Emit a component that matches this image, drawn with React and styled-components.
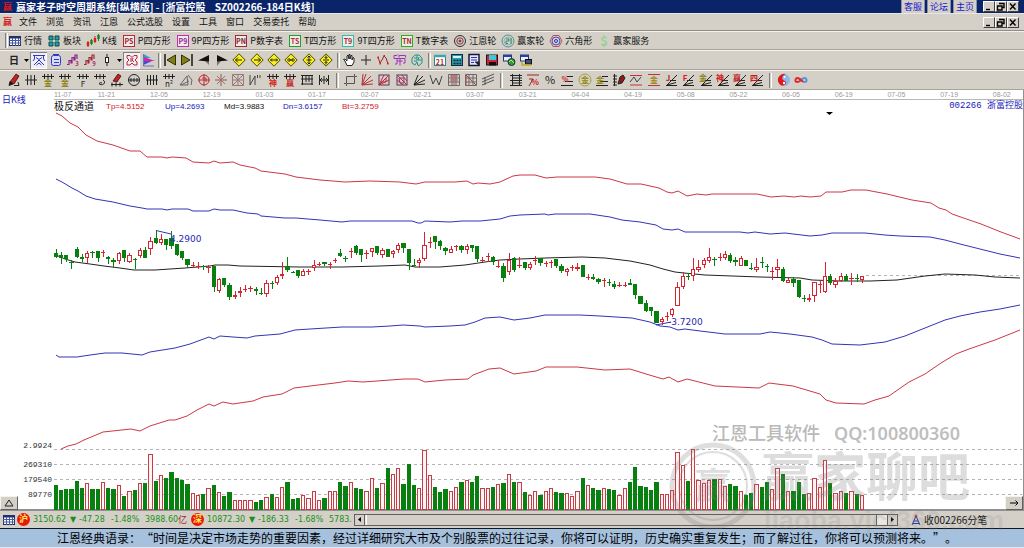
import React from 'react'
import styled, { createGlobalStyle } from 'styled-components'

const GlobalStyle = createGlobalStyle`
  * {
    box-sizing: border-box;
  }
  body {
    margin: 0;
    background: #d4d0c8;
    font-family: "Noto Sans CJK SC", "Liberation Sans", sans-serif;
    font-size: 9px;
    color: #111;
  }
  button {
    font: inherit;
    color: inherit;
    padding: 0;
    margin: 0;
    border: 0;
    background: none;
  }
  svg {
    display: block;
  }
`

const Page = styled.div`
  position: relative;
`
const TitleBar = styled.header`
  display: flex;
  align-items: center;
  height: 14px;
  padding: 0 5px 0 3px;
  gap: 2px;
  background: #0a246a;
  color: #fff;
  border-bottom: 1px solid #e8e6e0;
`
const Title = styled.h1`
  margin: 0;
  flex: 1;
  font-size: 10px;
  line-height: 14px;
  font-weight: 700;
  white-space: pre;
`
const Logo = styled.span`
  width: 11px;
  font-size: 9px;
  line-height: 14px;
  font-weight: 700;
  color: #d81820;
`
const TitleLink = styled.a`
  padding: 0 2px;
  font-size: 9px;
  line-height: 13px;
  color: #1818d0;
  background: #d4d0c8;
  border: 1px solid #8890a8;
  border-width: 0 1px;
  text-decoration: none;
`
const WindowButtons = styled.div`
  display: flex;
  margin-left: 4px;
`
const WindowButton = styled.button`
  width: 12px;
  height: 11px;
  background: #d4d0c8;
  border: 1px solid #fff;
  border-right-color: #404040;
  border-bottom-color: #404040;
`
const MenuBar = styled.nav`
  display: flex;
  align-items: center;
  height: 17px;
  padding: 0 5px 0 3px;
  border-bottom: 1px solid #908c84;
`
const MenuItem = styled.button`
  margin-left: 9px;
  line-height: 14px;
  &:first-of-type {
    margin-left: 5px;
  }
`
const Spacer = styled.div`
  flex: 1;
`
const Toolbar = styled.div`
  display: flex;
  align-items: center;
  height: ${(p) => p.$h || 20}px;
  padding-left: 5px;
  border-top: 1px solid #f4f2ee;
  border-bottom: 1px solid #a8a49c;
`
const Grip = styled.span`
  width: 3px;
  height: 15px;
  margin-right: ${(p) => p.$after || 0}px;
  margin-left: ${(p) => p.$before || 0}px;
  border-left: 1px solid #808080;
  border-right: 1px solid #fff;
`
const ToolLink = styled.button`
  display: flex;
  align-items: center;
  gap: 2px;
  margin-right: 5px;
  line-height: 14px;
  white-space: nowrap;
`
const IconGroup = styled.div`
  display: grid;
  grid-auto-flow: column;
  grid-auto-columns: 1fr;
  width: ${(p) => p.$w}px;
`
const IconButton = styled.button`
  display: flex;
  align-items: center;
  justify-content: center;
  height: 17px;
  background: ${(p) => (p.$on ? '#eeeef4' : 'none')};
  box-shadow: ${(p) => (p.$on ? 'inset 1px 1px #808080, inset -1px -1px #fff' : 'none')};
`
const Caret = styled.button`
  width: 7px;
  height: 17px;
  display: flex;
  align-items: center;
  justify-content: center;
`
const Chart = styled.main`
  background: #fff;
  border-right: 1px solid #909090;
`
const ChartHead = styled.div`
  display: flex;
  height: 22px;
`
const Period = styled.div`
  width: 54px;
  padding: 3px 0 0 2px;
  font-size: 9px;
  line-height: 13px;
  color: #1818b8;
`
const HeadRight = styled.div`
  flex: 1;
  min-width: 0;
`
const Dates = styled.div`
  display: flex;
  height: 10px;
  margin-right: -5px;
  border-bottom: 1px solid #b8b8b8;
  font-family: "Liberation Sans", sans-serif;
  font-size: 7px;
  line-height: 10px;
  color: #999;
  text-align: center;
`
const DatesClip = styled.div`
  overflow: hidden;
`
const DateCell = styled.span`
  flex: 1;
  &:first-child {
    flex: 0 0 26px;
    text-align: left;
  }
`
const Legend = styled.div`
  display: flex;
  height: 12px;
  line-height: 13px;
`
const LegendItem = styled.span`
  width: ${(p) => p.$w || 59}px;
  font-family: "Liberation Sans", "Noto Sans CJK SC", sans-serif;
  font-size: ${(p) => p.$size || 8}px;
  color: ${(p) => p.$c || '#111'};
  white-space: nowrap;
`
const Symbol = styled.span`
  margin-left: auto;
  font-family: "Liberation Mono", "Noto Sans CJK SC", monospace;
  color: #1818b8;
  white-space: pre;
`
const ChartFoot = styled.div`
  display: flex;
  justify-content: space-between;
  height: 15px;
  margin-top: -15px;
  border-bottom: 2px solid #909090;
`
const CornerButton = styled.button`
  position: relative;
  width: 18px;
  height: 14px;
  display: flex;
  align-items: center;
  justify-content: center;
  background: #d4d0c8;
  border: 1px solid #f4f2ee;
  border-right-color: #606060;
  border-bottom-color: #606060;
`
const StatusBar = styled.footer`
  display: flex;
  align-items: center;
  height: 17px;
  padding-left: 2px;
  font-family: "DejaVu Sans", "Noto Sans CJK SC", sans-serif;
  font-size: 8px;
  line-height: 14px;
`
const Badge = styled.span`
  width: 13px;
  height: 13px;
  margin: 0 3px 0 1px;
  border-radius: 50%;
  background: #e81808;
  color: #ffe860;
  font-size: 9px;
  line-height: 12px;
  font-weight: 700;
  text-align: center;
`
const Quote = styled.span`
  display: flex;
  color: #189020;
  white-space: nowrap;
  width: ${(p) => p.$w}px;
`
const Figure = styled.span`
  width: ${(p) => p.$w}px;
`
const Unit = styled.span`
  font-size: 9px;
  color: #a02820;
`
const ScrollBar = styled.div`
  display: flex;
  flex: 1;
  height: 12px;
  background: #e8e6e0;
  border-top: 1px solid #606060;
  border-bottom: 1px solid #606060;
`
const ScrollButton = styled.button`
  width: 11px;
  display: flex;
  align-items: center;
  justify-content: center;
  background: #d4d0c8;
  border: 1px solid #606060;
  border-width: 0 1px;
`
const Thumb = styled.div`
  flex: 1;
  margin: 0 10px 0 1px;
  background: #d4d0c8;
  border-left: 1px solid #fff;
  border-right: 1px solid #606060;
`
const Feed = styled.div`
  display: flex;
  align-items: center;
  width: 126px;
  padding-left: 12px;
  gap: 2px;
  font-family: "Noto Sans CJK SC", sans-serif;
  font-size: 10px;
`
const Ticker = styled.p`
  margin: 0;
  height: 20px;
  padding-left: 57px;
  border-top: 1px solid #101820;
  border-bottom: 1px solid #e4e8ee;
  background: #a6c1de;
  font-size: 12px;
  line-height: 18px;
  color: #000;
  white-space: nowrap;
  text-spacing-trim: space-all;
`
const Watermark = styled.div`
  position: absolute;
  right: 10px;
  bottom: 6px;
  width: 350px;
  pointer-events: none;
`

const candles = `g249,253,257,258 g252,255,258,264 g255,255,259,262 g260,262,262,269 g247,249,257,258 g254,257,259,262
r251,253,258,263 g251,252,252,258 g251,251,258,262 r250,252,252,257 g256,257,259,264 g258,260,262,267
r252,253,261,264 g250,250,258,262 r253,255,262,263 g258,259,259,269 r248,250,256,258 g247,250,258,258
r237,241,249,255 g230,238,243,244 r234,239,243,245 g239,239,245,250 g231,238,246,249 g244,244,255,256
g251,251,258,260 g259,259,265,268 r262,265,265,268 r262,266,266,269 g265,266,266,270 r265,267,267,273
g266,266,287,292 r278,279,291,293 g278,278,285,287 g283,285,297,300 r291,295,297,299 r287,291,293,297
r285,289,289,292 r286,288,289,292 g287,289,291,295 g288,293,293,295 r280,283,294,297 g281,283,283,289
r275,277,283,285 r262,274,276,279 g257,266,270,272 g271,272,272,273 g270,270,276,278 r269,271,276,276
r269,271,271,275 r260,265,268,271 r262,264,264,266 g262,262,264,266 r262,264,264,269 r258,260,261,263
g249,253,256,257 g256,258,258,262 r248,251,251,258 g245,246,253,255 g249,249,255,262 r250,253,253,259
r248,248,252,257 g246,246,253,255 r248,250,255,258 g249,249,257,257 r250,251,254,258 r243,245,250,253
g243,243,248,253 g249,249,263,270 g259,265,265,266 r258,260,263,268 r232,245,259,261 r237,242,242,248
g236,236,242,249 g240,241,246,250 g247,248,251,255 r246,249,253,253 r245,246,246,251 g245,246,250,253
r244,246,250,254 g245,245,248,252 g246,246,259,262 r257,260,260,262 r253,256,257,262 g256,257,262,265
r260,266,266,268 g263,266,278,282 r253,260,272,275 g257,258,270,272 r257,265,265,268 g262,262,268,270
r262,264,268,270 r256,260,261,265 g258,258,263,266 r261,263,263,267 r260,262,262,268 g259,259,266,268
g264,266,271,273 r268,269,272,276 r265,267,267,271 r263,267,269,271 g265,265,277,277 r274,277,277,280
g274,277,279,280 g278,279,282,284 r278,280,280,287 g279,282,282,286 g281,284,287,289 r282,285,285,287
r282,285,285,287 g279,283,285,285 g284,284,295,299 g296,296,304,304 g300,303,311,312 g307,307,311,316
g311,311,323,323 r317,319,322,325 r312,316,316,321 r308,309,315,317 r282,287,306,306 r272,276,287,289
g273,276,276,280 r258,269,276,281 r260,267,270,272 r258,260,265,268 r248,257,261,263 g257,259,259,266
r253,257,257,261 r251,254,258,260 g253,255,261,263 g257,260,262,266 r256,258,266,266 g260,260,266,266
g263,268,268,270 r258,267,270,272 g257,262,262,268 g264,266,266,272 r267,271,271,280 r259,267,270,277
g267,269,281,282 r278,280,283,283 g277,279,283,287 g280,280,297,298 g295,298,298,302 r294,298,300,302
r282,282,296,302 r281,284,284,293 r262,276,292,293 g274,276,283,285 r278,281,285,288 r273,276,281,282
g274,276,281,281 r273,278,278,285 g274,278,279,282 r276,276,280,283`
  .split(/\s+/)
  .map((s) => ({ up: s[0] === 'r', v: s.slice(1).split(',').map(Number) }))

// thirds of a pixel down from y = 430, the floor is at 240
const volumes = [
  165, 180, 178, 176, 153, 174, 160, 177, 177, 157, 174, 178, 166, 198, 184, 180, 160, 160, 72, 153, 136, 144, 126, 144,
  150, 162, 190, 196, 192, 175, 165, 187, 198, 187, 210, 211, 211, 210, 216, 210, 202, 192, 202, 172, 157, 208, 205, 196,
  205, 183, 211, 203, 184, 184, 155, 168, 155, 174, 176, 184, 145, 174, 160, 115, 133, 115, 163, 101, 166, 175, 61, 136,
  171, 186, 176, 184, 172, 157, 151, 157, 139, 175, 175, 171, 162, 159, 133, 157, 155, 185, 196, 184, 195, 184, 174, 185,
  189, 190, 199, 184, 144, 166, 174, 180, 175, 178, 180, 196, 175, 156, 112, 169, 171, 180, 157, 193, 193, 181, 66, 106,
  153, 58, 151, 160, 151, 147, 146, 169, 163, 169, 184, 194, 190, 163, 171, 157, 177, 115, 133, 183, 183, 156, 192, 189,
  145, 172, 91, 160, 190, 183, 190, 184, 192, 196,
]

const curves = [
  {
    color: '#cc3844',
    points:
      '56,113 62,116 70,123 78,127 86,135 97,141 113,145 130,151 140,151 147,157 162,157 167,158 172,157 186,158 193,162 209,163 214,161 220,163 233,162 240,165 255,168 261,171 285,174 296,177 320,180 345,182 370,181 400,182 416,184 425,182 455,182 467,181 473,184 478,183 490,184 500,182 513,176 520,175 535,175 546,178 557,177 595,177 610,179 627,184 641,184 659,188 667,192 672,193 678,191 687,196 697,194 706,195 712,194 757,194 771,197 784,196 794,197 801,196 810,197 821,196 826,192 842,192 851,190 866,190 887,194 912,200 931,203 939,208 946,210 952,214 981,224 1001,232 1020,239',
  },
  {
    color: '#3434b4',
    points:
      '56,179 62,182 72,188 78,191 86,196 95,199 113,202 130,206 142,208 147,209 162,209 167,210 172,209 188,209 193,211 209,211 214,209 220,210 233,210 247,213 258,214 261,216 285,218 296,218 320,220 342,222 350,221 412,221 418,223 421,223 425,221 450,222 462,221 480,221 500,219 510,216 520,215 545,214 548,215 555,214 590,214 610,217 622,220 640,222 656,225 663,229 672,230 678,229 685,232 740,232 748,233 755,232 770,234 785,233 810,236 822,235 832,233 865,233 885,235 900,236 930,237 945,240 960,244 980,249 1000,254 1020,258',
  },
  {
    color: '#222',
    points:
      '56,255 65,259 75,262 90,264 104,266 120,268 134,270 155,270 185,268 210,266 215,265 228,265 240,266 300,267 342,267 380,266 405,265 415,267 440,267 465,265 485,262 500,260 520,259 545,258 582,257 605,258 630,261 650,265 663,269 675,272 684,273 705,275 760,277 800,278 812,280 840,281 870,281 897,280 925,276 945,274 975,275 995,277 1020,278',
  },
  {
    color: '#3434b4',
    points:
      '56,355 59,357 77,357 90,355 105,353 122,353 142,355 150,352 175,348 190,344 209,337 214,339 220,336 233,337 247,338 255,336 280,334 295,330 310,329 342,327 372,327 390,326 403,325 420,326 425,327 450,326 465,325 475,322 485,318 500,317 514,320 530,318 545,315 580,315 600,316 632,318 650,322 660,326 670,327 678,330 685,329 700,331 725,334 760,334 770,332 790,334 812,337 822,340 832,344 860,345 885,342 905,336 925,328 945,320 960,316 980,312 1000,309 1020,305',
  },
  {
    color: '#cc3844',
    points:
      '61,449 68,446 76,444 84,440 103,432 131,429 140,431 150,426 169,420 175,420 187,416 197,410 209,404 214,406 223,402 233,404 253,401 263,397 282,394 294,388 310,386 335,383 348,381 363,382 404,379 418,379 425,382 445,380 468,379 473,375 489,369 500,368 514,374 536,371 546,367 577,367 605,370 630,369 646,374 663,379 669,377 678,382 687,379 715,386 759,388 769,383 793,386 820,394 826,400 836,403 864,404 875,400 889,396 909,382 925,374 941,363 956,354 969,349 995,340 1020,330',
  },
]

const barX = (i) => Math.round(53.5 + 5.27 * i)

const PriceChart = () => (
  <svg viewBox="0 112 1023 399" width="100%" role="img" aria-label="日K线">
    <g stroke="#b4b4b4" strokeDasharray="3 3" shapeRendering="crispEdges">
      {[449, 464, 479, 494].map((y) => (
        <line key={y} x1="54" x2="1022" y1={y + 0.5} y2={y + 0.5} />
      ))}
      <line x1="866" x2="1020" y1="275.5" y2="275.5" />
    </g>
    <g fontFamily="'Liberation Mono', monospace" fontSize="8" fill="#333" textAnchor="end">
      <text x="52" y="448">2.9924</text>
      <text x="52" y="467">269310</text>
      <text x="52" y="482">179540</text>
      <text x="52" y="497">89770</text>
    </g>
    <g shapeRendering="crispEdges">
      {volumes.map((v, i) => {
        const x = barX(i)
        const w = barX(i + 1) - x - 1
        const y = Math.round(430 + v / 3)
        return candles[i].up ? (
          <rect key={i} x={x + 0.5} y={y + 0.5} width={w - 1} height={509 - y} fill="#fff4f4" stroke="#c83c48" />
        ) : (
          <rect key={i} x={x} y={y} width={w} height={510 - y} fill="#088010" />
        )
      })}
    </g>
    <g fill="none">
      {curves.map((c, i) => (
        <polyline key={i} points={c.points} stroke={c.color} />
      ))}
      <path d="M156 230.500L171 234M656 325L671 322" stroke="#3434b4" />
    </g>
    <g shapeRendering="crispEdges">
      {candles.map(({ up, v: [hi, top, bottom, lo] }, i) => {
        const x = barX(i)
        const w = barX(i + 1) - x - 1
        const color = up ? '#d82430' : '#088010'
        return (
          <g key={i}>
            <rect x={x + 2} y={hi} width="1" height={lo - hi} fill={color} />
            {bottom - top < 2 ? (
              <rect x={x} y={top} width={w} height="1" fill={color} />
            ) : up ? (
              <rect x={x + 0.5} y={top + 0.5} width={w - 1} height={bottom - top - 1} fill="#fff" stroke={color} />
            ) : (
              <rect x={x} y={top} width={w} height={bottom - top} fill={color} />
            )}
          </g>
        )
      })}
    </g>
    <g fontFamily="'DejaVu Sans', sans-serif" fontSize="9" fill="#2828b0">
      <text x="170" y="242">4.2900</text>
      <text x="668" y="325">-3.7200</text>
    </g>
    <path d="M826 112h7l-3.500 3z" fill="#000" />
  </svg>
)

const S = ({ w = 14, children }) => (
  <svg width={w} height="14" viewBox="0 0 14 14" fill="none" stroke="#222" aria-hidden="true">
    {children}
  </svg>
)
const T = ({ x = 7, y = 12, s = 8, c = '#222', b = 700, children }) => (
  <text x={x} y={y} fontSize={s} fontWeight={b} fill={c} stroke="none" textAnchor="middle">
    {children}
  </text>
)

const fence = <path d="M1 3.500H13M3.500 1V6M7 1V6M10.500 1V6" />
const fan = <path d="M2 12.500H13M3 12L12 9.500M3 12L13 2M6 7.500H12" />
const rules = <path d="M7 3.500H13M5 8.500H13M1 12.500H13" />
const fullFan = <path d="M2 12L13 11M2 12L13 7M2 12L11 3M2 12L6 2" />

const boxed = (label, color, ink) => (
  <S>
    <rect x="1.500" y="1.500" width="11" height="11" stroke={color} fill="#f0ece8" />
    <T y={9.5} s={7} c={ink}>
      {label}
    </T>
  </S>
)
const diamond = (d) => (
  <S>
    <path d="M7 .8L13.200 7L7 13.200L.8 7z" fill="#f8f020" stroke="#504c00" />
    <path d={d} stroke="#222" />
  </S>
)
const rings = (a, b) => (
  <S>
    <circle cx="7" cy="7" r="5.500" stroke={a} />
    <circle cx="7" cy="7" r="3.200" stroke={b} />
    <circle cx="7" cy="7" r="1" stroke={a} />
  </S>
)
const table = (
  <S>
    <rect x="1.500" y="2.500" width="11" height="9" fill="#fff" stroke="#20306c" />
    <path d="M1 3.500H13" strokeWidth="2" stroke="#20306c" />
    <path d="M1 6.500H13M1 9H13M4.500 4V12M7.500 4V12M10.500 4V12" stroke="#4858a0" />
  </S>
)
const yinYang = (
  <S>
    <circle cx="7" cy="7" r="6" fill="#88b8f0" stroke="none" />
    <path d="M9 1.200A6 6 0 1 0 5 12.700C10 12 10 8.500 7 7.500S5 2 9 1.200z" fill="#e01818" stroke="none" />
    <circle cx="7.500" cy="4" r="1" fill="#fff" stroke="none" />
    <circle cx="7" cy="10" r="1.200" fill="#fff" stroke="none" />
  </S>
)

const links = [
  ['行情', table],
  [
    '板块',
    <S>
      <path d="M2 2h4v4H2zM8 2h4v4H8zM2 8h4v4H2zM8 8h4v4H8z" fill="#20a0a0" stroke="#104848" />
      <path d="M4 6V8M6 10H8M10 6V8" stroke="#20c0c0" />
    </S>,
  ],
  [
    'K线',
    <S>
      <path d="M2 7V13M9 2V9" stroke="#d82020" />
      <path d="M5.500 5V11M12.500 0V7" stroke="#108818" />
      <path d="M2 8V12M9 4V8" stroke="#d82020" strokeWidth="2.400" />
      <path d="M5.500 6V10M12.500 1V5" stroke="#108818" strokeWidth="2.400" />
    </S>,
  ],
  ['P四方形', boxed('PS', '#b82838', '#a02030')],
  ['9P四方形', boxed('P9', '#c030b0', '#a020a0')],
  ['P数字表', boxed('PN', '#a02838', '#802030')],
  ['T四方形', boxed('TS', '#20a030', '#b03038')],
  ['9T四方形', boxed('T9', '#30c0b0', '#a03038')],
  ['T数字表', boxed('TN', '#30b020', '#a03028')],
  ['江恩轮', rings('#303030', '#a02830')],
  [
    '赢家轮',
    <S>
      <circle cx="7" cy="7" r="6" stroke="#4c9888" />
      <circle cx="7" cy="7" r="4" stroke="#88b0d0" />
      <path d="M5 5H8V7H5V9.500H7M10 4V10" stroke="#38885c" />
    </S>,
  ],
  [
    '六角形',
    <S>
      <path d="M4 1.500H10L13 7L10 12.500H4L1 7z" stroke="#c05058" />
      <circle cx="7" cy="7" r="4" stroke="#4848c8" />
      <circle cx="7" cy="7" r="1.500" stroke="#3030d0" />
    </S>,
  ],
  [
    '赢家服务',
    <S>
      <T y={12} s={13} c="#98d098">
        $
      </T>
    </S>,
  ],
]

const wave = (color, n) => (
  <S>
    <path d="M1 11.500H3V7.500H5V10H6V4.500H8V7H9V2H11V6" stroke={color} strokeWidth="1.200" />
    <T x={11} y={13} s={6} c="#b02868">
      {n}
    </T>
  </S>
)

const views = [
  [
    '波动图',
    <S>
      <path d="M1 2.500H13M2.500 2.500V6L1 8M11.500 2.500V6L13 8M4 4.500L7 6.500L10 4.500M2 12L7 7L12 12M4.500 12L7 10L9.500 12" stroke="#3038c8" />
    </S>,
    true,
  ],
  [
    '资料',
    <S>
      <rect x="2.500" y="2.500" width="9" height="10" rx="2" fill="#d8dcf8" stroke="#3038c8" />
      <path d="M4 1.500H10M5 6.500H10M5 9.500H10" stroke="#3038c8" />
    </S>,
  ],
  ['波段3', wave('#882088', '3')],
  ['波段9', wave('#a02838', '9')],
  [
    '蜡烛',
    <S>
      <path d="M7 1V13" />
      <rect x="5.500" y="4.500" width="3" height="5" fill="#fff" />
    </S>,
  ],
]
const marks = [
  [
    '区块',
    <S>
      <path d="M2 2.500H5L7 4.500L9 2.500H12V5L10 7L12 9V12H9L7 10L5 12H2V9L4 7L2 5zM6 5V9M8 5L7 7L9 9" stroke="#c82030" />
    </S>,
    true,
  ],
  [
    '旗形',
    <S>
      <path d="M1.500 1L9 5H1.500z" fill="#30a8b0" stroke="none" />
      <path d="M2 4L13 8H2z" fill="#d820b0" stroke="none" />
      <path d="M1.500 8H10L1.500 12z" fill="#4050d0" stroke="none" />
      <path d="M1.500 1V13H12" stroke="#6870c0" />
    </S>,
  ],
]
const nav = [
  [
    '最前',
    <S>
      <path d="M2 1V13" strokeWidth="1.600" />
      <path d="M12.500 2V12L4 7z" fill="#808010" stroke="#303000" />
    </S>,
  ],
  [
    '最后',
    <S>
      <path d="M12 1V13" strokeWidth="1.600" />
      <path d="M1.500 2V12L10 7z" fill="#808010" stroke="#303000" />
    </S>,
  ],
  [
    '上一个',
    <S>
      <path d="M12 2V12L8 8z" fill="#777" stroke="none" />
      <path d="M1 7.500L12 2V8.500z" fill="#111" stroke="none" />
    </S>,
  ],
  [
    '下一个',
    <S>
      <path d="M2 2V13L6 8z" fill="#777" stroke="none" />
      <path d="M2 2L13 7.500L2 8.500z" fill="#111" stroke="none" />
    </S>,
  ],
  ['左移', diamond('M3.500 7H10M6 4.500L3.500 7L6 9.500')],
  ['右移', diamond('M4 7H10.500M8 4.500L10.500 7L8 9.500')],
  ['拉宽', diamond('M3.500 7H10.500M5 5.500L3.500 7L5 8.500M9 5.500L10.500 7L9 8.500')],
  ['收窄', diamond('M3 7H11M4.500 5L6.500 7L4.500 9M9.500 5L7.500 7L9.500 9')],
  ['升高', diamond('M7 3V11M5.500 4.500L7 3L8.500 4.500M5.500 9.500L7 11L8.500 9.500M4.500 7H9.500')],
  ['降低', diamond('M7 2.500V5.500M5.500 4L7 5.500L8.500 4M7 11.500V8.500M5.500 10L7 8.500L8.500 10M4 7H10')],
]
const pointers = [
  [
    '手形',
    <S>
      <path d="M3 8L1.500 6.500L3 6L5 8V3L6 2L7 6V1.500H8V6L9 2.500H10V7L11 4.500L12 5V9L10 12.500H5z" fill="#fff" />
    </S>,
  ],
  [
    '十字线',
    <S>
      <path d="M7 2V12M2 7H12" />
    </S>,
  ],
  [
    '曲线',
    <S>
      <path d="M2 4L4 10L6 7L8 3L10 5L12 11" stroke="#902830" />
      <path d="M1.500 4.500H3M3.500 10.500H5M7.500 3H9M11 10.500H12.500" stroke="#e01818" strokeWidth="2" />
    </S>,
  ],
  [
    '节气',
    <S>
      <path d="M1 5.500V2.500H4L5 1.500M6 4.500V2.500H12.500V4.500M1 5.500H12V10H10M4 5.500V11H2M7 5.500V12.500M4 8H9.500" stroke="#a030b8" />
    </S>,
  ],
  [
    '画图板',
    <S>
      <path d="M2 5L5 2H9L12 5V10L9 12.500H8L7 9L5 12L2 10zM4 5H7V8H4M9 4L8 7H12M7 2V5" stroke="#209888" />
    </S>,
  ],
]
const disk = (extra) => (
  <S>
    <rect x="1.500" y="2" width="8" height="6" fill="#e8f0ff" stroke="#28386c" />
    <path d="M2 3H9" stroke="#2840a8" strokeWidth="2" />
    {extra}
  </S>
)
const utils = [
  [
    '日历',
    <S>
      <rect x="1.500" y="2.500" width="11" height="10" fill="#fff" stroke="#288890" />
      <path d="M1 3H13" stroke="#38a8b0" strokeWidth="2.500" />
      <T y={11.5} s={7} c="#c82020">
        21
      </T>
    </S>,
  ],
  [
    '计算器',
    <S>
      <rect x="1.500" y="1.500" width="11" height="11" fill="#2c98a8" stroke="#102c48" />
      <path d="M3 4H11" stroke="#d0f8f8" strokeWidth="2" />
      <path d="M3.500 7.500H11M3.500 10.500H11" stroke="#082838" strokeWidth="1.600" strokeDasharray="2 1" />
    </S>,
  ],
  [
    '记事本',
    <S>
      <rect x="2" y="1.500" width="10" height="11" fill="#e4e4ff" stroke="#181830" strokeWidth="1.500" />
      <path d="M4 4.500H10M4 7H10M4 9.500H7" stroke="#3830b8" />
      <path d="M8 9H12V13" fill="#181830" />
    </S>,
  ],
  [
    '保存',
    <S>
      <rect x="1.500" y="2" width="11" height="10" fill="#d82030" stroke="#101830" />
      <rect x="4" y="2" width="7" height="5" fill="#40c8d0" stroke="none" />
      <rect x="4" y="9" width="7" height="3.500" fill="#101010" stroke="none" />
    </S>,
  ],
  [
    '网络',
    disk(
      <>
        <circle cx="9.500" cy="9" r="3.500" fill="#389848" stroke="#183828" />
        <path d="M7 9L9 7L12 10" stroke="#c0e860" />
      </>
    ),
  ],
  [
    '电脑',
    disk(
      <>
        <rect x="6.500" y="6.500" width="6" height="4.500" fill="#404c70" stroke="#101010" />
        <path d="M3 9V12H12" stroke="#c0b020" strokeWidth="1.500" />
      </>
    ),
  ],
]

const pencil = (
  <>
    <path d="M3 9L9 1L12 3L7 11z" fill="#c82020" stroke="#301010" strokeWidth=".8" />
    <path d="M2 12.500L3 8.500L6 11z" fill="#111" />
    <path d="M7 12.500H12L11 9" />
  </>
)
const grid = <path d="M1.500 1.500H12.500V12.500H1.500zM5 1V13M9 1V13M1 5H13M1 9H13" stroke="#706868" />
const drawTools = [
  ['画笔', pencil],
  ['竖线', <path d="M1 7H13M3.500 2V12M7 2V12M10.500 2V12" />],
  ['黄金分割', <>{fence}<T y={13} c="#888008">金</T></>],
  ['黄金周期', <>{fence}<T y={13} c="#888008">金</T></>],
  ['费氏周期', <>{fence}<T y={13.5} b={400}>F</T></>],
  ['螺旋', <>{fence}<path d="M10 7A3 2.500 0 1 1 6 10.500A2 1.500 0 0 1 9 10" /></>],
  ['画笔周期', <><path d="M3 8L8 1L11 3L7 9z" fill="#c82020" stroke="#301010" strokeWidth=".8" /><path d="M1 11.500H13M2 9.500V13.500M6 9.500V13.500M10 9.500V13.500" /></>],
  ['圆周', <><circle cx="7" cy="7" r="5.500" /><path d="M1 7H13M4 5V9M7 5V9M10 5V9" /></>],
  ['等距线', <path d="M1 7H13M2.500 2V12M5.500 2V12M8.500 2V12M11.500 2V12" />],
  ['平方', <>{fence}<T y={13.5} b={400}>n²</T></>],
  ['三角', <path d="M1 12L8 3L9 12zM9 2L13 7L12 12M2 12L10 8" stroke="#666" />],
  ['圆十字', <><circle cx="7" cy="7" r="5" stroke="#b03038" /><path d="M7 1V13M1 7H13M5 5H9V9" stroke="#c02830" /></>],
  ['放射', <><path d="M7 1V13M1 7H13" stroke="#806060" /><path d="M3 3L11 11M11 3L3 11" stroke="#b86068" /></>],
  ['九宫', <><path d="M1.500 1.500H12.500V12.500H1.500zM2 2L12 12M12 2L2 12M7 1V13M1 7H13" stroke="#987878" /></>],
  ['折线', <path d="M2 2V12L7 3V12M9.500 2V5M12 2V5" stroke="#444" />],
  ['神奇数', <>{fence}<T y={13} c="#d82018">神</T></>],
  ['赢家数', <>{fence}<T y={13} c="#c82018">赢</T></>],
  ['网格周期', <path d="M1 2.500H13M1 6H13M2.500 2V12M6 2V9M9 2V9M12 2V12M1 11H13" />],
  ['对称', <path d="M2.500 2V12M11.500 2V12M7 3V11M3 7H11M5 5L3 7L5 9M9 5L11 7L9 9" />],
]
const shapeTools = [
  ['矩形', <path d="M3.500 3.500H11.500V10.500H3.500zM1 10.500H3M3.500 11V13M11.500 1V3M12 3.500H14" stroke="#555" />],
  ['射线', <path d="M2 12L13 11M2 12L13 7M2 12L11 3M2 12L6 1M2 12L3 1" stroke="#b83038" />],
  ['角度框', <><rect x="2" y="2" width="10" height="10" stroke="#583068" /><path d="M2 12L12 2M2 12L12 7M2 12L7 2M4 9H9V5" stroke="#c02838" /></>],
  ['角度网', <><rect x="2" y="2" width="10" height="10" stroke="#583068" /><path d="M2 2L12 12M2 7L8 12M7 2L12 8M4 5H9V10H5z" stroke="#a83050" /></>],
  ['扇形', fullFan],
  ['锯齿', <path d="M1 2L4 11L7 5L10 12L13 3" stroke="#444" />],
  ['方格', <>{grid}<path d="M3 3H11M3 7H11M7 2V12" stroke="#c05860" /></>],
  ['方格2', <>{grid}<path d="M2 2L12 12M2 2V12" stroke="#a04850" /></>],
  ['平行线', <path d="M1 6L13 1M1 9L13 4M1 12L13 7M4 4V12" stroke="#555" />],
]
const ratioTools = [
  ['标尺', <path d="M3.500 1V13M10.500 1V13M1 2.500H13M4 5H13M1 7.500H13M4 10H13M1 12.500H13" />],
  ['百分比线', <><path d="M1 2H13M3 6H7L3 13" stroke="#902830" /><T x={9} y={12} s={8} c="#d02020">%</T></>],
  ['百分比', <T y={11} s={11} b={400}>%</T>],
  ['比例', <>{rules}<T x={5} y={9} s={7} c="#d02020">%</T></>],
  ['金圈', <><circle cx="7" cy="7" r="6" stroke="#a8a030" /><T y={10} s={8} c="#908810">金</T></>],
  ['金线', <>{rules}<T x={5} y={10} c="#908810">金</T></>],
  ['量尺', <><path d="M2.500 1V13M1 3H5M1 6H5M1 9H5M1 12H5" /><path d="M6 11L8 4L11 2L13 5L10 10z" fill="#901818" /></>],
  ['波幅', <><path d="M1 2.500H13M1 12H13" stroke="#c83038" /><path d="M1 9L5 4L8 9L12 4" stroke="#444" /></>],
  ['金幅', <><path d="M1 1.500H13M1 12.500H13" stroke="#c83038" /><T y={10} s={8} c="#988810">金</T></>],
  ...[['J', '#c02020'], ['F', '#e01818'], ['金', '#888010'], ['神', '#d01818'], ['赢', '#c01818'], ['四', '#d01818']].map(([t, c]) => [
    t + '扇线',
    <>
      {fan}
      <T x={4} y={8} s={8} c={c}>
        {t}
      </T>
    </>,
  ]),
]

const Icons = ({ items, w, bare }) => (
  <IconGroup $w={w}>
    {items.map(([name, icon, on], i) => (
      <IconButton key={i} title={name} aria-label={name} $on={on}>
        {bare ? <S>{icon}</S> : icon}
      </IconButton>
    ))}
  </IconGroup>
)

const Arrow = ({ d = 'M1 2H6L3.500 5z' }) => (
  <svg width="7" height="7" viewBox="0 0 7 7" aria-hidden="true">
    <path d={d} fill="#000" />
  </svg>
)

const WinButtons = () => (
  <WindowButtons>
    {[
      ['最小化', 'M2 7.500H6'],
      ['还原', 'M3 1.500H8V5.500H6.500M1.500 4H6V8H1.500z'],
      ['关闭', 'M2 1.500L7.500 7.500M7.500 1.500L2 7.500'],
    ].map(([name, d]) => (
      <WindowButton key={name} aria-label={name}>
        <svg width="10" height="9" viewBox="0 0 10 9" fill="none" stroke="#000" strokeWidth="1.400">
          <path d={d} />
        </svg>
      </WindowButton>
    ))}
  </WindowButtons>
)

const dates = ['11-07', '11-21', '12-05', '12-19', '01-03', '01-17', '02-07', '02-21', '03-07', '03-21', '04-04', '04-19', '05-08', '05-22', '06-05', '06-19', '07-05', '07-19', '08-02']
const menus = ['文件', '浏览', '资讯', '江恩', '公式选股', '设置', '工具', '窗口', '交易委托', '帮助']

export default function App() {
  return (
    <Page lang="zh-CN">
      <GlobalStyle />
      <TitleBar>
        <Logo>赢</Logo>
        <Title>赢家老子时空周期系统[纵横版] - [浙富控股    SZ002266-184日K线]</Title>
        <TitleLink href="#service">客服</TitleLink>
        <TitleLink href="#forum">论坛</TitleLink>
        <TitleLink href="#home">主页</TitleLink>
        <WinButtons />
      </TitleBar>
      <MenuBar>
        <Logo>赢</Logo>
        {menus.map((m) => (
          <MenuItem key={m}>{m}</MenuItem>
        ))}
        <Spacer />
        <WinButtons />
      </MenuBar>
      <Toolbar $h={19}>
        <Grip />
        {links.map(([name, icon]) => (
          <ToolLink key={name}>
            {icon}
            {name}
          </ToolLink>
        ))}
      </Toolbar>
      <Toolbar>
        <IconGroup $w={18}>
          <IconButton aria-label="日线">
            <S>
              <T y={11} s={10}>
                日
              </T>
            </S>
          </IconButton>
        </IconGroup>
        <Caret aria-label="周期">
          <Arrow />
        </Caret>
        <Icons items={views} w={86} />
        <Caret aria-label="线型">
          <Arrow />
        </Caret>
        <Icons items={marks} w={34} />
        <Grip $before={1} />
        <Icons items={nav} w={174} />
        <Grip $before={2} />
        <Icons items={pointers} w={86} />
        <Grip $before={2} />
        <Icons items={utils} w={104} />
      </Toolbar>
      <Toolbar>
        <Icons items={drawTools} w={328} bare />
        <Grip $before={3} $after={2} />
        <Icons items={shapeTools} w={156} bare />
        <Grip $before={3} $after={4} />
        <Icons items={ratioTools} w={259} bare />
        <Grip $before={3} $after={3} />
        <IconGroup $w={35}>
          <IconButton aria-label="太极">{yinYang}</IconButton>
          <IconButton aria-label="无限">
            <S>
              <path d="M7 7C5 4.500 2 4 1.500 7S5 9.500 7 7" stroke="#e02828" strokeWidth="2" />
              <path d="M7 7C9 4.500 12 4 12.500 7S9 9.500 7 7" stroke="#5890d8" strokeWidth="2" />
              <path d="M5 5.500L9 8.800" stroke="#e02828" strokeWidth="2" />
            </S>
          </IconButton>
        </IconGroup>
      </Toolbar>
      <Chart>
        <ChartHead>
          <Period>日K线</Period>
          <HeadRight>
            <DatesClip>
              <Dates>
                {dates.map((d) => (
                  <DateCell key={d}>{d}</DateCell>
                ))}
              </Dates>
            </DatesClip>
            <Legend>
              <LegendItem $w={52} $size={10}>
                极反通道
              </LegendItem>
              <LegendItem $c="#d01828">Tp=4.5152</LegendItem>
              <LegendItem $c="#1818b8">Up=4.2693</LegendItem>
              <LegendItem>Md=3.9883</LegendItem>
              <LegendItem $c="#1818b8">Dn=3.6157</LegendItem>
              <LegendItem $c="#d01828">Bt=3.2759</LegendItem>
              <Symbol>002266 浙富控股</Symbol>
            </Legend>
          </HeadRight>
        </ChartHead>
        <PriceChart />
        <ChartFoot>
          <CornerButton aria-label="展开">
            <svg width="10" height="8" viewBox="0 0 10 8" fill="none" stroke="#222">
              <path d="M5 1L9 7H1z" />
            </svg>
          </CornerButton>
          <CornerButton aria-label="右移">
            <svg width="10" height="8" viewBox="0 0 10 8" fill="none" stroke="#000">
              <path d="M1 4H9M6.500 1.500L9 4L6.500 6.500" />
            </svg>
          </CornerButton>
        </ChartFoot>
      </Chart>
      <StatusBar>
        {table}
        <Badge>沪</Badge>
        <Quote $w={157}>
          <Figure $w={37}>3150.62</Figure>
          <Figure $w={9}>▼</Figure>
          <Figure $w={32}>-47.28</Figure>
          <Figure $w={34}>-1.48%</Figure>
          <Figure>3988.60</Figure>
          <Unit>亿</Unit>
        </Quote>
        <Badge>深</Badge>
        <Quote $w={147}>
          <Figure $w={42}>10872.30</Figure>
          <Figure $w={9}>▼</Figure>
          <Figure $w={37}>-186.33</Figure>
          <Figure $w={34}>-1.68%</Figure>
          <Figure>5783.</Figure>
        </Quote>
        <ScrollBar>
          <ScrollButton aria-label="向左滚动">
            <Arrow d="M5 1V6L2 3.500z" />
          </ScrollButton>
          <Thumb />
          <ScrollButton aria-label="向右滚动">
            <Arrow d="M2 1V6L5 3.500z" />
          </ScrollButton>
        </ScrollBar>
        <Feed>
          <svg width="12" height="12" viewBox="0 0 12 12" fill="none" stroke="#2838a0" aria-hidden="true">
            <path d="M6 2L2 11M6 2L10 11M4 7H8M3 9.500H9" />
            <circle cx="6" cy="2" r="1" stroke="#c02838" />
          </svg>
          收002266分笔
        </Feed>
      </StatusBar>
      <Ticker>
        江恩经典语录：“时间是决定市场走势的重要因素，经过详细研究大市及个别股票的过往记录，你将可以证明，历史确实重复发生；而了解过往，你将可以预测将来。”。
      </Ticker>
      <Watermark>
        <svg viewBox="0 0 350 126" width="100%" fill="#808080" fontWeight="700">
          <text x="48" y="24" fontSize="18" fontWeight="500" opacity=".55">
            江恩工具软件
          </text>
          <text x="170" y="24" fontSize="18" fontWeight="600" opacity=".5" fontFamily="'Noto Sans', sans-serif">
            QQ:100800360
          </text>
          <g opacity=".25" fill="none" stroke="#808080">
            <circle cx="49" cy="70" r="41" strokeWidth="5" />
            <circle cx="49" cy="70" r="34" strokeWidth="2" />
            <text x="49" y="83" fontSize="36" fill="#808080" stroke="none" textAnchor="middle">
              赢
            </text>
          </g>
          <text x="98" y="80" fontSize="52" opacity=".26">
            赢家聊吧
          </text>
          <text x="100" y="114" fontSize="27" opacity=".16" fontFamily="'Liberation Sans', sans-serif">
            liaoba.yjcf360.com
          </text>
        </svg>
      </Watermark>
    </Page>
  )
}
